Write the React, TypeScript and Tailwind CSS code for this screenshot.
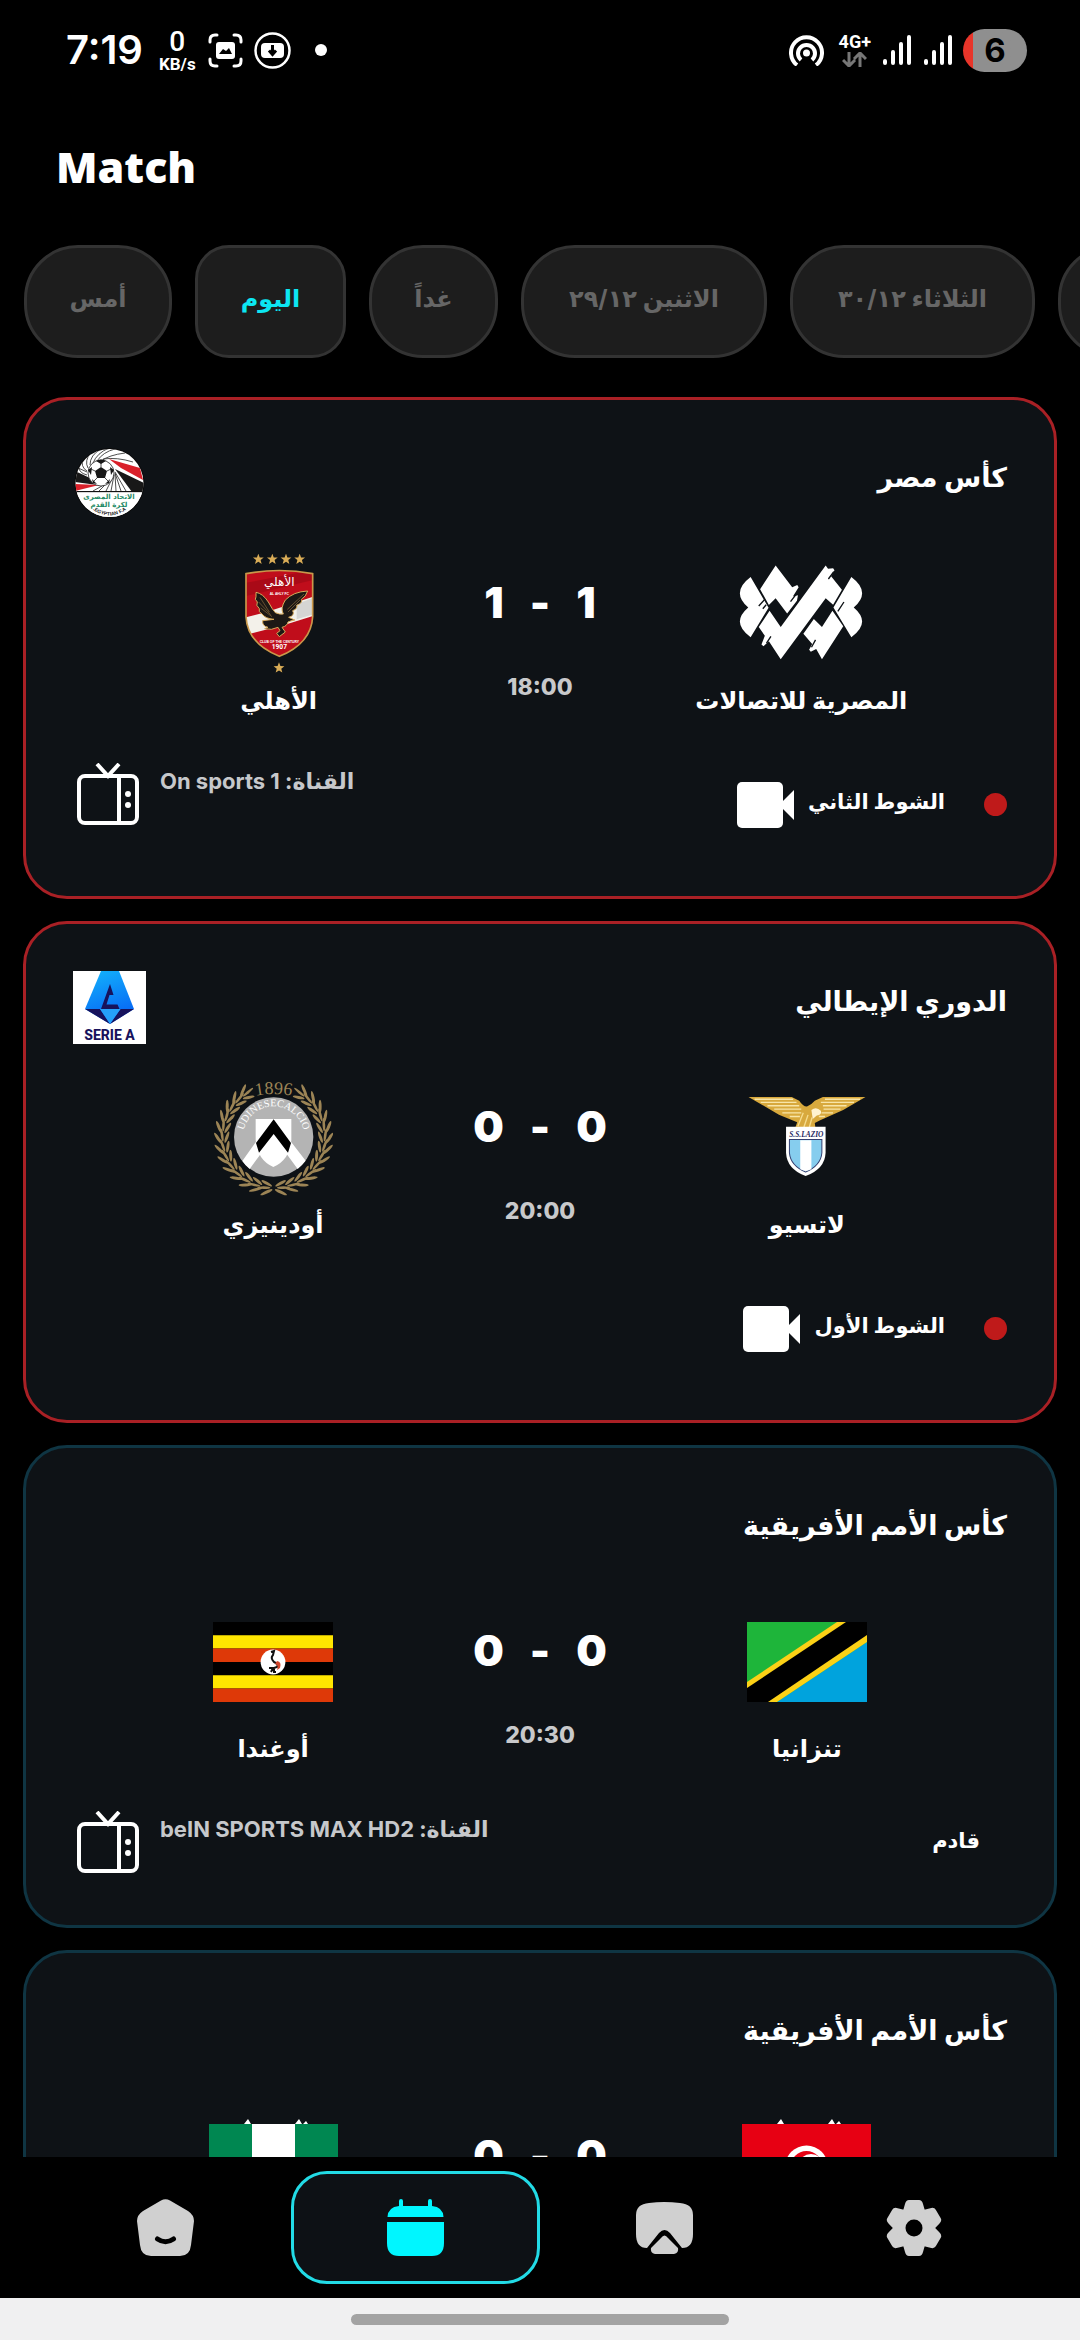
import React, { useState } from 'react';

type Team = { name: string; logo: React.ReactNode }

type Match = {
  id: number
  league: string
  leagueLogo?: React.ReactNode
  home: Team
  away: Team
  homeScore: number
  awayScore: number
  time: string
  status: string
  live: boolean
  channel?: string
}

const star = (cx: number, cy: number, r: number) =>
  Array.from({ length: 10 }, (_, i) => {
    const radius = i % 2 ? r * 0.42 : r
    const angle = (Math.PI / 5) * i - Math.PI / 2
    return `${cx + radius * Math.cos(angle)},${cy + radius * Math.sin(angle)}`
  }).join(' ')

function EgyptCupLogo() {
  return (
    <svg viewBox="0 0 73 73" className="size-[73px]" aria-hidden="true">
      <clipPath id="efa"><circle cx="36.5" cy="36" r="34" /></clipPath>
      <circle cx="36.5" cy="36" r="35" fill="#0a0a0a" />
      <g clipPath="url(#efa)">
        <rect width="73" height="73" fill="#fff" />
        <g stroke="#222" strokeWidth="0.8" fill="none">
          <path d="M28 14 Q36 8 52 6 M24 14 Q30 5 42 2 M20 16 Q24 6 36 1 M17 18 Q17 8 28 2 M15 21 Q11 14 18 5 M14 24 Q7 20 10 10 M14 28 Q5 26 5 17 M30 12 Q44 10 60 15 M14 25 L3 20" />
          <path d="M38 32 L26 44 M40 30 L33 44 M41 28 L38 44 M42 27 L43 44 M42 26 L48 44 M42 25 L53 44 M36 35 L20 44" />
        </g>
        <path d="M36 12 L67 21 L70 33 L48 21Z" fill="#d9202a" />
        <path d="M42 22 L71 36 V45 H59Z" fill="#181818" />
        <path d="M2 24 L17 31 L24 38 L2 35Z" fill="#181818" />
        <path d="M2 37 L26 38 L2 44Z" fill="#d9202a" />
        <circle cx="28" cy="26" r="13" fill="#fff" stroke="#222" strokeWidth="0.8" />
        <path d="M28 20 L34 24 L32 31 H24 L22 24Z M23 14 Q28 11 33 14 L28 17Z M41 23 L37 20 L38 28Z M15 23 L19 20 L18 28Z M20 36 L19 32 L24 37Z M36 36 L37 32 L32 37Z" fill="#181818" />
        <path d="M28 20 V16 M34 24 L38 22 M32 31 L35 34 M24 31 L21 34 M22 24 L18 22" stroke="#222" strokeWidth="0.8" />
        <rect y="44" width="73" height="1.4" fill="#111" />
        <rect y="45.400" width="73" height="28" fill="#fff" />
        <text x="36" y="52" textAnchor="middle" fontSize="7" fontWeight="700" fontFamily="DejaVu Sans" fill="#1f8a66">الاتحاد المصرى</text>
        <text x="36" y="60" textAnchor="middle" fontSize="7" fontWeight="700" fontFamily="DejaVu Sans" fill="#1f8a66">لكرة القدم</text>
        <path id="efa-arc" d="M15 59 Q36.500 78 58 59" fill="none" />
        <text fontSize="5" fontWeight="700" fontFamily="Liberation Sans" fill="#222">
          <textPath href="#efa-arc" startOffset="50%" textAnchor="middle">EGYPTIAN F.A.</textPath>
        </text>
      </g>
    </svg>
  )
}

function SerieALogo() {
  return (
    <svg viewBox="0 0 73 73" className="size-[73px]" aria-hidden="true">
      <linearGradient id="serie-a" x1="0" y1="0" x2="0.3" y2="1">
        <stop offset="0" stopColor="#13b4fb" />
        <stop offset="1" stopColor="#0766f5" />
      </linearGradient>
      <rect width="73" height="73" fill="#fff" />
      <path d="M28 0 H46 L61 38 L37 53 L12 38Z" fill="url(#serie-a)" />
      <path d="M12 38 H27 L37 53Z M61 38 H47.500 L37 53Z" fill="#17125c" />
      <path d="M27 38 H47.500 L37 53Z" fill="#25a0fa" />
      <path d="M37 13 L40.500 24 L36.500 24 L33.500 33.500 H44.500 L46.500 38 H28Z" fill="#17125c" />
      <text x="36.500" y="69" textAnchor="middle" fontSize="14" fontWeight="800" fontFamily="Roboto" fill="#17125c">SERIE A</text>
    </svg>
  )
}

function AhlyLogo() {
  return (
    <svg viewBox="57 42 360 360" className="size-[120px]" aria-hidden="true">
      <clipPath id="ahly"><path d="M138 101 Q238 82 338 101 V230 Q334 310 238 349 Q142 310 138 230Z" /></clipPath>
      {[175, 217, 258, 299].map((x) => (
        <polygon key={x} points={star(x, 58, 17)} fill="#d9ac57" />
      ))}
      <polygon points={star(237, 384, 17)} fill="#d9ac57" />
      <g clipPath="url(#ahly)">
        <rect x="130" y="80" width="220" height="280" fill="#c00d1b" />
        <path d="M130 130 L340 90 V120 L130 170Z" fill="#a90a17" />
        <path d="M130 234 L200 216 L345 168 V226 L250 256 L130 286Z" fill="#f3f1ea" />
        <path d="M290 192 L345 172 V222 L290 238Z" fill="#d5d5d3" />
      </g>
      <path d="M138 101 Q238 82 338 101 V230 Q334 310 238 349 Q142 310 138 230Z" fill="none" stroke="#c9984a" strokeWidth="5" />
      <path
        d="M168 157 Q188 160 205 186 Q218 210 226 218 Q240 224 250 222 Q240 205 256 180 Q280 155 323 153 Q318 170 304 178 Q310 188 290 196 Q294 206 278 212 Q286 226 266 232 L284 240 Q272 242 264 246 Q262 258 246 262 L256 276 L238 290 L230 280 L240 272 L234 262 Q214 272 194 266 L204 262 Q186 258 188 242 L222 238 Q196 236 186 222 Q174 216 178 206 Q166 196 172 186 Q162 178 168 170Z"
        fill="#1c1815"
        stroke="#d6a95a"
        strokeWidth="3"
      />
      <path d="M180 172 L208 216 M176 186 L212 224 M182 204 L216 230 M312 162 L262 208 M300 180 L264 216" stroke="#8d6c3c" strokeWidth="2" />
      <text x="238" y="137" textAnchor="middle" fontSize="36" fontFamily="DejaVu Sans" fill="#fff">الأهلي</text>
      <text x="238" y="164" textAnchor="middle" fontSize="10" fontWeight="700" fontFamily="Liberation Sans" fill="#fff">AL AHLY FC</text>
      <text x="238" y="308" textAnchor="middle" fontSize="10" fontWeight="700" fontFamily="Liberation Sans" fill="#fff">CLUB OF THE CENTURY</text>
      <text x="238" y="328" textAnchor="middle" fontSize="20" fontWeight="700" fontFamily="Roboto" fill="#fff">1907</text>
    </svg>
  )
}

function TelecomLogo() {
  return (
    <svg viewBox="577 514 360 355" className="h-[120px] w-[124px]" aria-hidden="true">
      <g fill="#fff">
        <path d="M608 582 Q548 627 601 672 Q548 717 608 760 L661 673Z" />
        <path d="M906 582 Q966 627 913 672 Q966 717 906 760 L853 672Z" />
        <path d="M682 548 L731 612 L746 606 L750 612 L733 640 L748 636 L745 652 L716 690 L682 645 L662 665 L636 618Z" />
        <path d="M830 548 L837 558 L852 556 L856 562 L846 580 L878 620 L852 664 L830 645 L697 825 L662 772 L646 787 L640 782 L650 756 L632 730 L664 682 L697 730Z" />
        <path d="M795 706 L819 730 L850 682 L882 728 L819 825 L802 795 L786 803 L781 797 L790 780 L764 750Z" />
      </g>
      <path d="M632 668 L650 648 M644 676 L654 664 M866 684 L884 656 M726 655 L742 634 M655 778 L668 758 M788 790 L800 768 M838 588 L854 566" stroke="#0e1216" strokeWidth="4" />
    </svg>
  )
}

function UdineseLogo() {
  const steps = Array.from({ length: 13 }, (_, i) => 32 + i * 11.6)
  return (
    <svg viewBox="42 54 360 360" className="size-[120px]" aria-hidden="true">
      {[1, -1].map((side) => (
        <g key={side} transform={`translate(224 231) scale(${side} 1)`} fill="#9c8455">
          {steps.map((deg) => (
            <g key={deg} transform={`rotate(${deg}) translate(0 -154)`}>
              <ellipse cx="-4" cy="-13" rx="20" ry="4.500" transform="rotate(34)" />
              <ellipse cx="-6" cy="0" rx="20" ry="4" transform="rotate(8)" />
              <ellipse cx="-4" cy="13" rx="18" ry="4.500" transform="rotate(-20)" />
            </g>
          ))}
        </g>
      ))}
      <circle cx="224" cy="231" r="125" fill="#0e1216" />
      <circle cx="224" cy="231" r="119" fill="#b4b4b4" />
      <path d="M171 245 L190 275 L152 327 Q138 315 130 303Z M276 245 L258 275 L296 327 Q310 315 320 302Z" fill="#fff" />
      <path d="M170 177 H277 V240 Q272 300 223 321 Q175 300 170 240Z" fill="#fff" />
      <path d="M224 178 L276 249 L267 278 L224 222 L180 278 L171 249Z" fill="#000" />
      <path id="udi-arc" d="M132 231 A92 92 0 0 1 316 231" fill="none" />
      <text fontSize="31" fontFamily="Liberation Serif" fill="#fff">
        <textPath href="#udi-arc" startOffset="50%" textAnchor="middle">UDINESECALCIO</textPath>
      </text>
      <path id="udi-year" d="M150 112 Q224 92 298 112" fill="none" />
      <text fontSize="54" fontFamily="Liberation Serif" fill="#9c8455">
        <textPath href="#udi-year" startOffset="50%" textAnchor="middle">1896</textPath>
      </text>
    </svg>
  )
}

function LazioLogo() {
  return (
    <svg viewBox="598 497 350 355" className="size-[120px]" aria-hidden="true">
      <path d="M600 553 H728 L750 564 Q762 582 773 581 Q786 576 796 564 L820 553 H946 L880 592 L812 622 L796 630 L798 645 H738 L744 628 L690 606 L660 588Z" fill="#d8a93d" />
      <path d="M618 560 H732 M636 569 H742 M656 579 H750 M676 589 H756 M700 600 H756 M722 611 H752 M930 560 H826 M912 569 H814 M890 579 H820 M872 589 H822 M850 600 H816 M826 611 H808" stroke="#f8e5a8" strokeWidth="4" />
      <path d="M786 592 Q800 580 814 594 Q818 606 802 608 L790 618Z" fill="#fff3cf" />
      <path d="M762 600 L746 640 M776 606 L764 642 M788 614 L780 642" stroke="#f6dc8d" strokeWidth="4" />
      <path d="M711 641 H828 V718 Q826 766 769 787 Q713 766 711 718Z" fill="#fff" />
      <path d="M721 679 H817 V718 Q814 756 769 775 Q724 756 721 718Z" fill="#86cdee" stroke="#333f70" strokeWidth="3" />
      <path d="M753 681 H786 V767 L769 773 L753 767Z" fill="#fff" />
      <text x="771" y="671" textAnchor="middle" fontSize="22" fontStyle="italic" fontWeight="700" fontFamily="Liberation Serif" fill="#26295f">S.S.LAZIO</text>
    </svg>
  )
}

function UgandaFlag() {
  return (
    <svg viewBox="0 0 120 80" className="h-[80px] w-[120px]" aria-hidden="true">
      <rect width="120" height="80" fill="#000" />
      <path d="M0 13.300 H120 V26.600 H0Z M0 53.300 H120 V66.600 H0Z" fill="#ffe600" />
      <path d="M0 26.600 H120 V40 H0Z M0 66.600 H120 V80 H0Z" fill="#de3908" />
      <circle cx="60" cy="40" r="12.400" fill="#fff" />
      <path d="M58 30 L61 29 L60 33 Q57 36 61 40 Q66 42 64 45 L61 46 L61 50 H63 M60 46 L58 50 M61 46 L56 46" fill="none" stroke="#111" strokeWidth="2" />
      <path d="M64 39 Q69 40 67 46 L64 48 Q66 43 62 42Z" fill="#d0452d" />
    </svg>
  )
}

function TanzaniaFlag() {
  return (
    <svg viewBox="0 0 120 80" className="h-[80px] w-[120px]" aria-hidden="true">
      <rect width="120" height="80" fill="#1eb53a" />
      <path d="M120 20 V80 H30Z" fill="#00a3dd" />
      <path d="M90 0 H120 V20 L30 80 H0 V60Z" fill="#fcd116" />
      <path d="M99 0 H120 V13 L21 80 H0 V66Z" fill="#000" />
    </svg>
  )
}

function NigeriaFlag() {
  return (
    <svg viewBox="0 0 129 96" className="h-[96px] w-[129px]" aria-hidden="true">
      <path d="M35 5 L39 0 L42 5Z M86 5 L90 0 L93 5Z M94 5 L97 2 L99 5Z" fill="#fff" />
      <path d="M0 5 H43 V91 H0Z M86 5 H129 V91 H86Z" fill="#008751" />
      <rect x="43" y="5" width="43" height="86" fill="#fff" />
    </svg>
  )
}

function TunisiaFlag() {
  return (
    <svg viewBox="0 0 129 96" className="h-[96px] w-[129px]" aria-hidden="true">
      <path d="M35 5 L39 0 L42 5Z M86 5 L90 0 L93 5Z M94 5 L97 2 L99 5Z" fill="#fff" />
      <rect y="5" width="129" height="86" fill="#e70013" />
      <circle cx="64.500" cy="48" r="21.500" fill="#fff" />
      <circle cx="64.500" cy="48" r="16" fill="#e70013" />
      <circle cx="69" cy="48" r="13" fill="#fff" />
      <polygon points={star(69, 48, 9)} fill="#e70013" />
    </svg>
  )
}

function TvIcon() {
  return (
    <svg viewBox="0 0 62 62" className="size-[62px]" fill="none" stroke="#fff" strokeWidth="4" aria-hidden="true">
      <rect x="2" y="13" width="58" height="47" rx="6" />
      <path d="M42 13 V60 M20 1 L31 13 L42 1" />
      <circle cx="51" cy="31" r="3" fill="#fff" stroke="none" />
      <circle cx="51" cy="42" r="3" fill="#fff" stroke="none" />
    </svg>
  )
}

function CameraIcon() {
  return (
    <svg viewBox="0 0 57 46" className="h-[46px] w-[57px]" fill="#fff" aria-hidden="true">
      <rect width="46" height="46" rx="5" />
      <path d="M42 23 L57 8 V38Z" />
    </svg>
  )
}

const navItems = [
  {
    id: 'home',
    label: 'Home',
    icon: (
      <svg viewBox="0 0 57 57" className="size-[57px]" fill="currentColor" aria-hidden="true">
        <path d="M24 1.500 Q28.500 -1 33 1.500 L51 12 Q57 16 57 22 L54 46 Q53 57 43 57 H14 Q4 57 3 46 L0 22 Q0 16 6 12Z" />
        <path d="M20.500 40 Q28.500 45.500 36.500 40" fill="none" stroke="#000" strokeWidth="5" strokeLinecap="round" />
      </svg>
    ),
  },
  {
    id: 'matches',
    label: 'Matches',
    icon: (
      <svg viewBox="0 0 57 57" className="size-[57px]" fill="currentColor" aria-hidden="true">
        <path d="M12 7 V2 Q12 0 14 0 Q16 0 16 2 V7 H41 V2 Q41 0 43 0 Q45 0 45 2 V7 Q56 8 56.500 18 H0.500 Q1 8 12 7Z" />
        <path d="M0 23 H57 V44 Q57 57 45 57 H12 Q0 57 0 44Z" />
      </svg>
    ),
  },
  {
    id: 'live',
    label: 'Live',
    icon: (
      <svg viewBox="0 0 57 52" className="h-[52px] w-[57px]" fill="currentColor" aria-hidden="true">
        <path d="M13 1 Q28 -1 44 1 Q57 2 57 13 V32 Q57 46 46 46 L34 31 Q28.500 25 23 31 L11 46 Q0 46 0 32 V13 Q0 2 13 1Z" />
        <path d="M25 36 Q28.500 31 32 36 L42 46 Q43 51 38 52 H19 Q14 51 15 46Z" />
      </svg>
    ),
  },
  {
    id: 'settings',
    label: 'Settings',
    icon: (
      <svg viewBox="-28 -28 56 56" className="size-[56px]" aria-hidden="true">
        <circle r="21" fill="currentColor" />
        {[0, 60, 120].map((deg) => (
          <path
            key={deg}
            d="M-5 -28 H5 Q8 -28 9 -24 L11 -17 H-11 L-9 -24 Q-8 -28 -5 -28Z M-5 28 H5 Q8 28 9 24 L11 17 H-11 L-9 24 Q-8 28 -5 28Z"
            transform={`rotate(${deg})`}
            fill="currentColor"
          />
        ))}
        <circle r="8.500" fill="#000" />
      </svg>
    ),
  },
]

const days = [
  { label: 'أمس', width: 'w-[148px]' },
  { label: 'اليوم', width: 'w-[151px]' },
  { label: 'غداً', width: 'w-[129px]' },
  { label: 'الاثنين ٢٩/١٢', width: 'w-[246px]' },
  { label: 'الثلاثاء ٣٠/١٢', width: 'w-[245px]' },
  { label: 'الأربعاء ٣١/١٢', width: 'w-[245px]' },
]

const matches: Match[] = [
  {
    id: 1,
    league: 'كأس مصر',
    leagueLogo: <EgyptCupLogo />,
    home: { name: 'المصرية للاتصالات', logo: <TelecomLogo /> },
    away: { name: 'الأهلي', logo: <AhlyLogo /> },
    homeScore: 1,
    awayScore: 1,
    time: '18:00',
    status: 'الشوط الثاني',
    live: true,
    channel: 'On sports 1',
  },
  {
    id: 2,
    league: 'الدوري الإيطالي',
    leagueLogo: <SerieALogo />,
    home: { name: 'لاتسيو', logo: <LazioLogo /> },
    away: { name: 'أودينيزي', logo: <UdineseLogo /> },
    homeScore: 0,
    awayScore: 0,
    time: '20:00',
    status: 'الشوط الأول',
    live: true,
  },
  {
    id: 3,
    league: 'كأس الأمم الأفريقية',
    home: { name: 'تنزانيا', logo: <TanzaniaFlag /> },
    away: { name: 'أوغندا', logo: <UgandaFlag /> },
    homeScore: 0,
    awayScore: 0,
    time: '20:30',
    status: 'قادم',
    live: false,
    channel: 'beIN SPORTS MAX HD2',
  },
  {
    id: 4,
    league: 'كأس الأمم الأفريقية',
    home: { name: 'تونس', logo: <TunisiaFlag /> },
    away: { name: 'نيجيريا', logo: <NigeriaFlag /> },
    homeScore: 0,
    awayScore: 0,
    time: '23:00',
    status: 'قادم',
    live: false,
    channel: 'beIN SPORTS MAX HD1',
  },
]

function SignalBars() {
  return (
    <svg viewBox="0 0 28 30" className="h-[30px] w-[28px]" stroke="#fff" strokeWidth="4" strokeLinecap="round" aria-hidden="true">
      <path d="M2 28 V26 M10 28 V17 M18 28 V9 M26 28 V2" />
    </svg>
  )
}

function StatusBar() {
  return (
    <div className="flex h-[100px] shrink-0 items-center justify-between pr-[53px] pl-[66px]">
      <div className="flex items-center">
        <span className="text-[40px] leading-none font-semibold">7:19</span>
        <div className="ml-[16px] flex flex-col items-center font-['Roboto',sans-serif]">
          <span className="text-[28px] leading-[28px] font-medium">0</span>
          <span className="text-[17px] leading-[16px] font-bold">KB/s</span>
        </div>
        <svg viewBox="0 0 35 35" className="ml-[12px] size-[35px]" fill="none" stroke="#fff" strokeWidth="3" strokeLinecap="round" aria-hidden="true">
          <path d="M2 9 V7 Q2 2 7 2 H9 M26 2 H28 Q33 2 33 7 V9 M33 26 V28 Q33 33 28 33 H26 M9 33 H7 Q2 33 2 28 V26" />
          <rect x="8" y="9" width="19" height="17" rx="3" fill="#fff" stroke="none" />
          <path d="M11 21 L15 16 L18 18 L21 15 L24 21Z" fill="#000" stroke="none" />
        </svg>
        <svg viewBox="0 0 37 37" className="ml-[11px] size-[37px]" aria-hidden="true">
          <circle cx="18.500" cy="18.500" r="17" fill="none" stroke="#fff" strokeWidth="2.500" />
          <rect x="7" y="11" width="23" height="15" rx="4" fill="#fff" />
          <path d="M18.500 13 V21 M15 18.500 L18.500 22.500 L22 18.500" fill="none" stroke="#000" strokeWidth="3" />
        </svg>
        <span className="ml-[24px] size-[12px] rounded-full bg-white" />
      </div>
      <div className="flex items-center">
        <svg viewBox="0 0 35 31" className="h-[31px] w-[35px]" fill="none" stroke="#fff" strokeWidth="4" aria-hidden="true">
          <path d="M8 30 A15.500 15.500 0 1 1 27 30" />
          <path d="M12 25 A8.500 8.500 0 1 1 23 25" />
          <circle cx="17.500" cy="18" r="3.500" fill="#fff" stroke="none" />
        </svg>
        <div className="ml-[15px] flex flex-col items-center gap-[2px] font-['Roboto',sans-serif]">
          <span className="text-[18px] leading-[16px] font-bold">4G+</span>
          <svg viewBox="0 0 25 15" className="h-[15px] w-[25px]" fill="none" stroke="#777" strokeWidth="3" aria-hidden="true">
            <path d="M7 0 V13 M1 8 L7 14 L13 8 M18 15 V2 M12 7 L18 1 L24 7" />
          </svg>
        </div>
        <div className="ml-[12px] flex gap-[13px]">
          <SignalBars />
          <SignalBars />
        </div>
        <div className="ml-[11px] flex h-[43px] w-[64px] items-center justify-center rounded-full bg-linear-to-r from-[#e8352a] from-15% to-[#8f8f8f] to-15% text-[33px] leading-none font-bold text-black">
          6
        </div>
      </div>
    </div>
  )
}

function TeamBlock({ team }: { team: Team }) {
  return (
    <div className="flex flex-1 flex-col items-center">
      <div className="flex h-[120px] items-center">{team.logo}</div>
      <p className="mt-[2px] mb-[4px] text-[24px] leading-[50px] font-bold whitespace-nowrap">{team.name}</p>
    </div>
  )
}

function MatchCard({ match }: { match: Match }) {
  return (
    <article
      dir="rtl"
      className={`shrink-0 rounded-[44px] border-[3px] bg-[#0e1216] p-[47px] ${match.live ? 'border-[#a92025]' : 'border-[#0f3543]'}`}
    >
      <header className="flex h-[73px] items-start justify-between">
        <h2 className="pt-[6px] text-[27px] leading-[50px] font-bold">{match.league}</h2>
        {match.leagueLogo}
      </header>

      <div className="mt-[34px] flex">
        <TeamBlock team={match.home} />
        <div className="flex flex-col items-center pt-[20px]">
          <div className="flex gap-[26px] text-[43px] leading-[56px] font-black">
            <span>{match.homeScore}</span>
            <span>-</span>
            <span>{match.awayScore}</span>
          </div>
          <time className="mt-[39px] text-[23px] leading-[36px] font-extrabold text-[#c8c9cb]">{match.time}</time>
        </div>
        <TeamBlock team={match.away} />
      </div>

      <footer className="mt-[30px] flex items-start justify-between">
        {match.live ? (
          <div className="flex h-[89px] items-center">
            <span className="size-[23px] rounded-full bg-[#bf1a1a]" />
            <span className="mr-[39px] ml-[14px] pb-[5px] text-[21px] leading-[36px] font-bold">{match.status}</span>
            <CameraIcon />
          </div>
        ) : (
          <div className="flex h-[70px] items-center pr-[27px]">
            <span className="pb-[5px] text-[21px] leading-[36px] font-bold">{match.status}</span>
          </div>
        )}
        {match.channel && (
          <div className="flex gap-[21px] pt-[3px] pl-[4px]">
            <p className="text-[22px] leading-[36px] font-bold text-[#c6c8cb]">القناة: {match.channel}</p>
            <TvIcon />
          </div>
        )}
      </footer>
    </article>
  )
}

export default function App() {
  const [day, setDay] = useState(1)
  const [tab, setTab] = useState('matches')

  return (
    <div className="flex h-screen flex-col overflow-hidden bg-black font-['Inter','DejaVu_Sans',sans-serif] text-white">
      <StatusBar />

      <header className="flex h-[145px] shrink-0 items-center pb-[11px] pl-[56px]">
        <h1 className="font-['Open_Sans','Noto_Sans',sans-serif] text-[43px] leading-[56px] font-extrabold">Match</h1>
      </header>

      <div className="flex shrink-0 gap-[23px] overflow-hidden pl-[24px]">
        {days.map((item, i) => (
          <button
            key={item.label}
            type="button"
            dir="rtl"
            onClick={() => setDay(i)}
            className={`h-[113px] shrink-0 border-[3px] border-[#333] bg-[#1d1d1d] pb-[5px] text-[24px] font-bold ${item.width} ${
              i === day ? 'rounded-[34px] text-[#0ce6f2]' : 'rounded-[54px] text-[#666]'
            }`}
          >
            {item.label}
          </button>
        ))}
      </div>

      <main className="mt-[39px] flex min-h-0 flex-1 flex-col gap-[22px] overflow-hidden px-[23px]">
        {matches.map((match) => (
          <MatchCard key={match.id} match={match} />
        ))}
      </main>

      <nav className="flex h-[141px] shrink-0 items-center px-[41px]">
        {navItems.map((item) => (
          <button
            key={item.id}
            type="button"
            aria-label={item.label}
            onClick={() => setTab(item.id)}
            className={`flex h-[113px] flex-1 items-center justify-center rounded-[36px] border-[3px] ${
              item.id === tab ? 'border-[#22dbe6] bg-[#0d1115] text-[#00f6ff]' : 'border-transparent text-[#d0d0d0]'
            }`}
          >
            {item.icon}
          </button>
        ))}
      </nav>

      <div className="flex h-[42px] shrink-0 items-center justify-center bg-[#f0f0f1]">
        <div className="h-[11px] w-[35%] rounded-full bg-[#a3a3a3]" />
      </div>
    </div>
  )
}
